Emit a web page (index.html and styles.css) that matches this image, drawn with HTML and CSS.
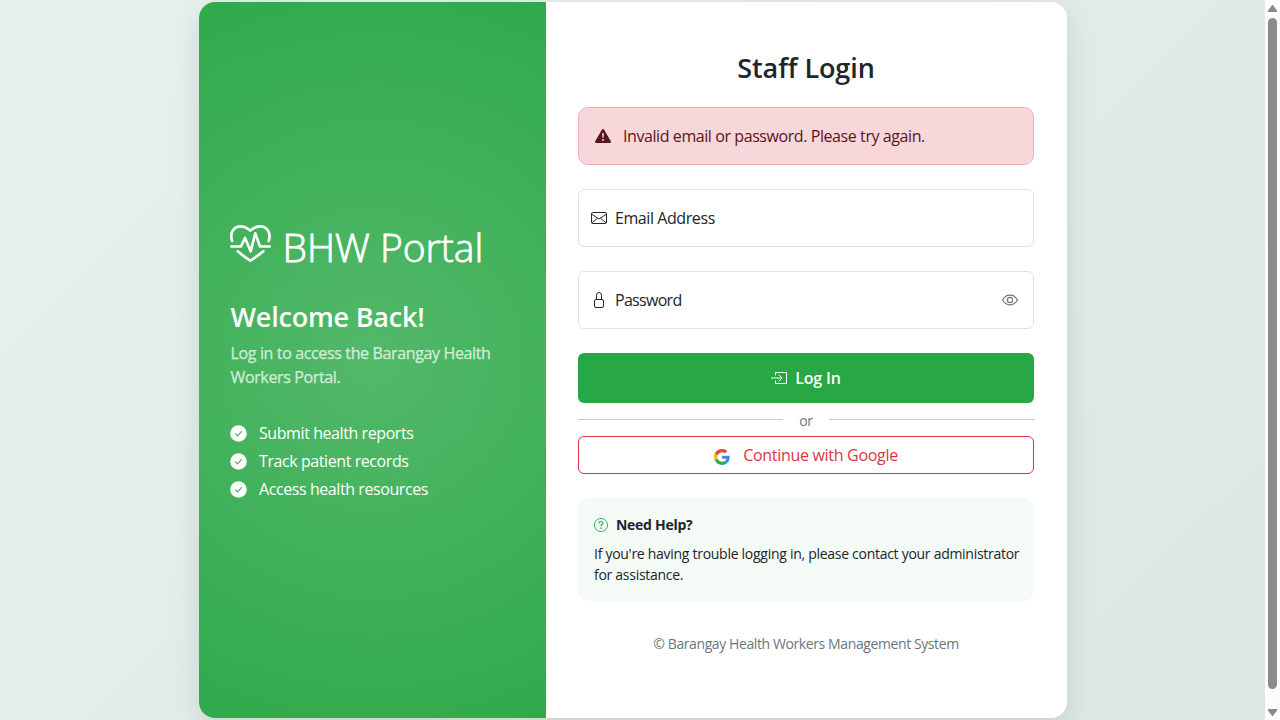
FILE: index.html
```html
<!DOCTYPE html>
<html lang="en">
<head>
<meta charset="utf-8">
<title>Staff Login</title>
<link rel="stylesheet" href="styles.css">
</head>
<body>
<div class="viewport">
  <main class="page">
    <div class="card">
      <section class="brand">
        <div class="logo">
          <svg class="logo-icon" viewBox="0 0 123 120" fill="none" stroke="#fff" stroke-width="8" stroke-linecap="round" stroke-linejoin="round"><path d="M6 51C-1 27 10 8 30 7C43 7 53 12 61 20C69 12 79 7 92 7C112 8 124 27 116 51M4 67.500H33L45 42L62 82L76 28L90 67.500H119M23 82Q42 98 61 110Q80 98 100 82"/></svg>
          <span class="logo-text">BHW Portal</span>
        </div>
        <h2>Welcome Back!</h2>
        <p class="lead">Log in to access the Barangay Health<br>Workers Portal.</p>
        <ul class="features">
          <li><svg viewBox="0 0 17 17"><circle cx="8.500" cy="8.500" r="8.300" fill="#fff"/><path d="M5.300 8.700l2.200 2.200 4.200-4.600" fill="none" stroke="#49b461" stroke-width="1.200"/></svg>Submit health reports</li>
          <li><svg viewBox="0 0 17 17"><circle cx="8.500" cy="8.500" r="8.300" fill="#fff"/><path d="M5.300 8.700l2.200 2.200 4.200-4.600" fill="none" stroke="#49b461" stroke-width="1.200"/></svg>Track patient records</li>
          <li><svg viewBox="0 0 17 17"><circle cx="8.500" cy="8.500" r="8.300" fill="#fff"/><path d="M5.300 8.700l2.200 2.200 4.200-4.600" fill="none" stroke="#49b461" stroke-width="1.200"/></svg>Access health resources</li>
        </ul>
      </section>
      <section class="login">
        <h1>Staff Login</h1>
        <div class="alert">
          <svg viewBox="0 0 16 16" fill="#58151c"><path fill-rule="evenodd" d="M8.982 1.566a1.130 1.130 0 0 0-1.960 0L.165 13.233c-.457.778.091 1.767.980 1.767h13.713c.889 0 1.438-.990.980-1.767zM8 5c.535 0 .954.462.900.995l-.350 3.507a.552.552 0 0 1-1.100 0L7.100 5.995A.905.905 0 0 1 8 5m.002 6a1 1 0 1 1 0 2 1 1 0 0 1 0-2"/></svg>
          <span>Invalid email or password. Please try again.</span>
        </div>
        <div class="field">
          <svg viewBox="0 0 16 16" fill="none" stroke="#212529"><rect x=".5" y="2.500" width="15" height="11" rx="1.300"/><path d="M.8 4.300L8 9l7.200-4.700M.8 12.800l5.700-4.600M15.200 12.800L9.500 8.200"/></svg>
          <span>Email Address</span>
        </div>
        <div class="field password">
          <svg viewBox="0 0 16 16" fill="none" stroke="#212529"><rect x="3.500" y="7.500" width="9" height="8" rx="1.500"/><path d="M5.500 7.500V3.200a2.500 2.700 0 0 1 5 0v4.300"/></svg>
          <span>Password</span>
          <svg class="eye" viewBox="0 0 16 16" fill="none" stroke="#6c757d" stroke-width="1.200"><path d="M.6 8S3.200 3.200 8 3.200 15.400 8 15.400 8 12.800 12.800 8 12.800.6 8 .6 8z"/><circle cx="8" cy="8" r="2.600"/></svg>
        </div>
        <div class="submit">
          <svg viewBox="0 0 16 16" fill="none" stroke="#fff" stroke-linecap="round" stroke-linejoin="round"><path d="M4.500 5V2.500h11v11h-11V11M.5 8h10M8 5l3 3-3 3"/></svg>
          <span>Log In</span>
        </div>
        <div class="divider"><span>or</span></div>
        <div class="google">
          <svg viewBox="0 0 48 48"><path fill="#EA4335" d="M24 9.500c3.540 0 6.710 1.220 9.210 3.600l6.850-6.850C35.900 2.380 30.470 0 24 0 14.620 0 6.510 5.380 2.560 13.220l7.980 6.190C12.430 13.720 17.740 9.500 24 9.500z"/><path fill="#4285F4" d="M46.980 24.550c0-1.570-.15-3.090-.38-4.550H24v9.020h12.940c-.58 2.960-2.260 5.480-4.780 7.180l7.730 6c4.510-4.180 7.090-10.360 7.090-17.650z"/><path fill="#FBBC05" d="M10.530 28.590c-.48-1.450-.76-2.990-.76-4.590s.27-3.140.76-4.590l-7.980-6.190C.92 16.460 0 20.120 0 24c0 3.880.92 7.540 2.560 10.780l7.970-6.190z"/><path fill="#34A853" d="M24 48c6.480 0 11.930-2.130 15.890-5.810l-7.730-6c-2.150 1.450-4.920 2.300-8.160 2.300-6.260 0-11.570-4.220-13.470-9.910l-7.980 6.190C6.510 42.620 14.620 48 24 48z"/></svg>
          <span>Continue with Google</span>
        </div>
        <div class="help">
          <h3><svg viewBox="0 0 16 16" fill="none" stroke="#28a745"><circle cx="8" cy="8" r="7.500"/><path d="M5.800 6.200C5.800 4.800 6.700 4 8 4s2.200.8 2.200 1.900C10.200 7.400 8 7.500 8 9.300" stroke-width="1.300"/><circle cx="8" cy="11.500" r=".5" fill="#28a745"/></svg>Need Help?</h3>
          <p>If you're having trouble logging in, please contact your administrator<br>for assistance.</p>
        </div>
        <footer>© Barangay Health Workers Management System</footer>
      </section>
    </div>
  </main>
  <div class="scrollbar"><i class="up"></i><i class="thumb"></i><i class="down"></i></div>
</div>
</body>
</html>
```
FILE: styles.css
```css
* { box-sizing: border-box; }
body { margin: 0; overflow: hidden; font: 16px/24px "Open Sans", "Noto Sans", sans-serif; letter-spacing: -.42px; color: #212529; white-space: nowrap; }
svg { display: block; flex: none; width: 16px; height: 16px; }
h1, h2, h3, p, ul { margin: 0; padding: 0; }
.viewport { display: grid; grid-template-columns: 1fr 15px; height: 720px; }
.page { padding: 2px 198px 2px 199px; background: linear-gradient(135deg, #e8f0ee, #dae8e1); overflow: hidden; }
.card { display: flex; height: 716px; border-radius: 16px; background: #fff; box-shadow: 0 10px 30px rgba(0, 0, 0, .1); }
.brand { flex: none; width: 347px; padding: 2px 31.500px 0; display: flex; flex-direction: column; justify-content: center; color: #fff; border-radius: 16px 0 0 16px; background: radial-gradient(circle 477px at 50% 50%, rgba(255, 255, 255, .2), transparent) #28a745; }
.logo { display: flex; gap: 12px; height: 48px; margin: 0 0 31px -1px; }
.logo-icon { width: 41px; height: 40px; margin-top: 3px; }
.logo-text { font-size: 39px; line-height: 51px; font-weight: 300; letter-spacing: 0; -webkit-text-stroke: .8px #fff; }
h2 { font-size: 27px; line-height: 34px; font-weight: 600; letter-spacing: -.2px; margin-bottom: 7px; }
.lead { opacity: .75; letter-spacing: -.36px; -webkit-text-stroke: .25px #fff; margin-bottom: 32px; }
.features { list-style: none; display: grid; gap: 4px; margin-left: -1px; }
.features li { display: flex; align-items: center; gap: 12.500px; }
.features svg { width: 17px; height: 17px; }
.login { flex: 1; min-width: 0; padding: 49px 33px 0 32px; }
h1 { font-size: 27px; line-height: 34px; font-weight: 600; letter-spacing: -.1px; text-align: center; margin-bottom: 22px; }
.alert { display: flex; align-items: center; gap: 12px; height: 58px; padding: 0 16px; margin-bottom: 24px; border: 1px solid #f1aeb5; border-radius: 10px; background: #f8d7da; color: #58151c; }
.field { display: flex; align-items: center; gap: 8px; height: 58px; padding: 0 15px 0 12px; margin-bottom: 24px; border: 1px solid #dee2e6; border-radius: 6px; }
.password { letter-spacing: -.7px; }
.eye { margin-left: auto; }
.submit { display: flex; align-items: center; justify-content: center; gap: 8px; height: 50px; border-radius: 6px; background: #28a745; color: #fff; font-weight: 600; letter-spacing: -.15px; }
.divider { display: flex; align-items: center; gap: 16px; height: 33px; font-size: 14px; letter-spacing: -.2px; color: #6c757d; }
.divider span { padding-top: 2px; }
.divider::before, .divider::after { content: ""; flex: 1; height: 1px; background: #c8c9ca; }
.google { display: flex; align-items: center; justify-content: center; gap: 13px; height: 38px; border: 1px solid #dc3545; border-radius: 6px; color: #dc3545; letter-spacing: -.3px; margin-bottom: 24px; }
.google svg { margin-top: 3px; }
.help { height: 103px; padding: 16px; border-radius: 10px; background: #f4faf6; font-size: 14px; letter-spacing: -.28px; line-height: 21px; }
.help h3 { display: flex; align-items: center; gap: 8px; font-size: 14px; font-weight: 700; line-height: 21px; margin-bottom: 8px; }
.help svg { width: 14px; height: 14px; }
footer { margin-top: 32px; text-align: center; font-size: 14px; letter-spacing: -.4px; line-height: 21px; color: #6c757d; }
.scrollbar { display: grid; grid-template-rows: 18px 671px 31px; justify-items: center; background: #fcfcfc; }
.thumb { width: 9px; height: 671px; border-radius: 5px; background: #8b8b8b; }
.up, .down { width: 9px; height: 7px; background: #8b8b8b; }
.up { margin-top: 5px; clip-path: polygon(45% 0, 55% 0, 100% 80%, 100% 100%, 0 100%, 0 80%); }
.down { margin-top: 20px; clip-path: polygon(0 0, 100% 0, 100% 20%, 55% 100%, 45% 100%, 0 20%); }
```
